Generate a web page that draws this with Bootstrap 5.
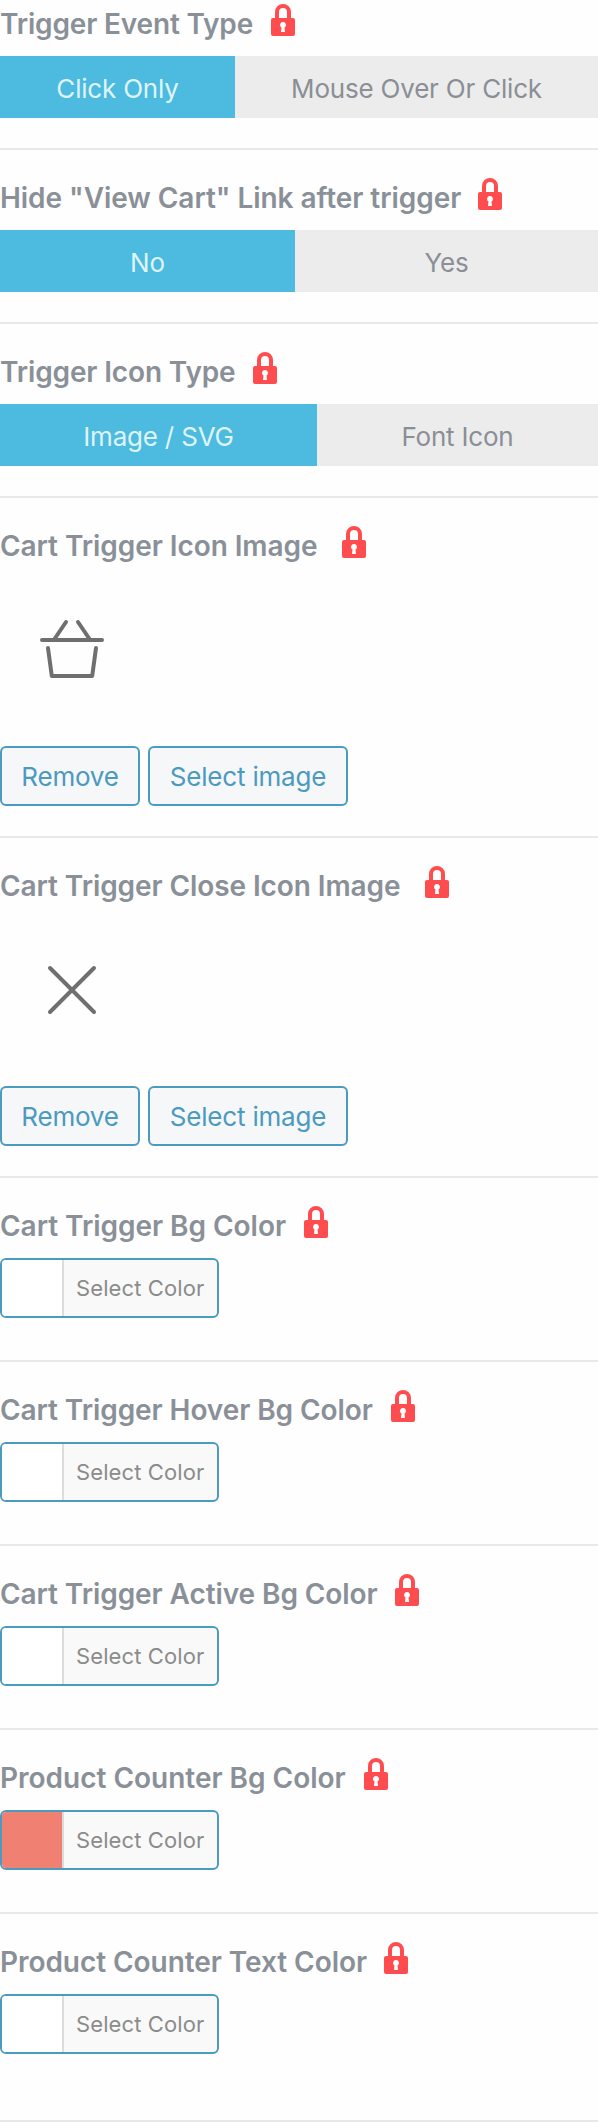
<!DOCTYPE html>
<html lang="en">
<head>
<meta charset="utf-8">
<meta name="viewport" content="width=device-width, initial-scale=1">
<title>Cart trigger settings</title>
<link href="https://cdn.jsdelivr.net/npm/bootstrap@5.3.0/dist/css/bootstrap.min.css" rel="stylesheet">
<style>
  body { font-family: Inter, "Liberation Sans", sans-serif; background: #fefefe; color: #8a8f96; overflow-x: hidden; }
  .field { padding: 28px 0 30px; border-bottom: 2px solid #e8e8e8; }
  .field:first-child { padding-top: 4px; }
  .field-color { padding-bottom: 42px; }
  .field-color:last-child { padding-bottom: 66px; }
  .field-head { height: 52px; }
  .field-title { width: var(--title-w); letter-spacing: var(--track, 0); font-size: 28px; font-weight: 600; line-height: 40px; white-space: nowrap; margin: 0; color: #8a9098; }
  .lock { width: 24px; height: 32px; flex: none; display: block; }

  /* title column width and tracking for each setting */
  .f-event   { --title-w: 271px; --track: -.17px; }
  .f-hide    { --title-w: 478px; --track: -.05px; }
  .f-type    { --title-w: 253px; --track: -.14px; }
  .f-image   { --title-w: 342px; --track: -.07px; }
  .f-close   { --title-w: 425px; --track: -.09px; }
  .f-bg      { --title-w: 304px; --track: -.04px; }
  .f-hover   { --title-w: 391px; --track: -.08px; }
  .f-active  { --title-w: 395px; --track: -.08px; }
  .f-counter { --title-w: 364px; --track: -.01px; }
  .f-text    { --title-w: 384px; --track: -.06px; }

  .switch .btn { height: 62px; padding: 3px 0 0; border: 0; border-radius: 0; background: #ececec; color: #8a8f96; font-size: 26px; line-height: 59px; letter-spacing: -.2px; flex: 1 1 0; }
  .switch .btn.active { background: #4dbbdf; color: #dff4fa; flex: none; }
  .f-event .btn.active { width: 235px; }
  .f-hide .btn.active { width: 295px; }
  .f-type .btn.active { width: 317px; }

  .preview { height: 168px; padding: 36px 0 0 36px; }
  .preview svg { width: 72px; height: 72px; display: block; }
  .btn-pick { height: 60px; padding: 1px 0 0; border: 2px solid #4b9abf; border-radius: 6px; background: #f6f7f9; color: #4b9abf; font-size: 26px; line-height: 55px; letter-spacing: -.2px; }
  .btn-remove { width: 140px; }
  .btn-select { width: 200px; }

  .picker { width: 219px; height: 60px; padding: 0; border: 2px solid #4b9abf; border-radius: 6px; background: #f9f9f9; overflow: hidden; }
  .swatch { width: 60px; background: #fff; }
  .swatch-coral { background: #f08072; }
  .picker-label { border-left: 2px solid #dcdcdc; padding-left: 12px; font-size: 22px; line-height: 56px; letter-spacing: .1px; color: #8b8b8b; white-space: nowrap; text-align: left; }
</style>
</head>
<body>
<svg class="d-none" aria-hidden="true">
  <symbol id="lock" viewBox="0 0 24 32">
    <path d="M6 15V8a6 6 0 0 1 12 0v7" fill="none" stroke="#ff4d4f" stroke-width="4"/>
    <rect y="14" width="24" height="18" rx="2" fill="#ff4d4f"/>
    <path d="M12 18a3 3 0 0 1 1.500 5.600L14 28h-4l.500-4.400A3 3 0 0 1 12 18z" fill="#fff"/>
  </symbol>
</svg>
<main>
  <section class="field f-event">
    <div class="field-head d-flex align-items-start"><h2 class="field-title">Trigger Event Type</h2><svg class="lock"><use href="#lock"/></svg></div>
    <div class="switch d-flex"><button class="btn active">Click Only</button><button class="btn">Mouse Over Or Click</button></div>
  </section>
  <section class="field f-hide">
    <div class="field-head d-flex align-items-start"><h2 class="field-title">Hide "View Cart" Link after trigger</h2><svg class="lock"><use href="#lock"/></svg></div>
    <div class="switch d-flex"><button class="btn active">No</button><button class="btn">Yes</button></div>
  </section>
  <section class="field f-type">
    <div class="field-head d-flex align-items-start"><h2 class="field-title">Trigger Icon Type</h2><svg class="lock"><use href="#lock"/></svg></div>
    <div class="switch d-flex"><button class="btn active">Image / SVG</button><button class="btn">Font Icon</button></div>
  </section>
  <section class="field f-image">
    <div class="field-head d-flex align-items-start"><h2 class="field-title">Cart Trigger Icon Image</h2><svg class="lock"><use href="#lock"/></svg></div>
    <div class="preview">
      <svg viewBox="0 0 72 72" fill="none" stroke="#6f6f6f" stroke-width="4" stroke-linecap="round" stroke-linejoin="round"><path d="M6 26H66M30 8L18.500 25M42 8L53.500 25M12 34L15.800 62H56.200L60 34"/></svg>
    </div>
    <div class="d-flex gap-2"><button class="btn btn-pick btn-remove">Remove</button><button class="btn btn-pick btn-select">Select image</button></div>
  </section>
  <section class="field f-close">
    <div class="field-head d-flex align-items-start"><h2 class="field-title">Cart Trigger Close Icon Image</h2><svg class="lock"><use href="#lock"/></svg></div>
    <div class="preview">
      <svg viewBox="0 0 72 72" fill="none" stroke="#6f6f6f" stroke-width="4" stroke-linecap="round"><path d="M14 14l44 44M58 14L14 58"/></svg>
    </div>
    <div class="d-flex gap-2"><button class="btn btn-pick btn-remove">Remove</button><button class="btn btn-pick btn-select">Select image</button></div>
  </section>
  <section class="field field-color f-bg">
    <div class="field-head d-flex align-items-start"><h2 class="field-title">Cart Trigger Bg Color</h2><svg class="lock"><use href="#lock"/></svg></div>
    <button class="btn picker d-flex align-items-stretch"><span class="swatch"></span><span class="picker-label flex-fill">Select Color</span></button>
  </section>
  <section class="field field-color f-hover">
    <div class="field-head d-flex align-items-start"><h2 class="field-title">Cart Trigger Hover Bg Color</h2><svg class="lock"><use href="#lock"/></svg></div>
    <button class="btn picker d-flex align-items-stretch"><span class="swatch"></span><span class="picker-label flex-fill">Select Color</span></button>
  </section>
  <section class="field field-color f-active">
    <div class="field-head d-flex align-items-start"><h2 class="field-title">Cart Trigger Active Bg Color</h2><svg class="lock"><use href="#lock"/></svg></div>
    <button class="btn picker d-flex align-items-stretch"><span class="swatch"></span><span class="picker-label flex-fill">Select Color</span></button>
  </section>
  <section class="field field-color f-counter">
    <div class="field-head d-flex align-items-start"><h2 class="field-title">Product Counter Bg Color</h2><svg class="lock"><use href="#lock"/></svg></div>
    <button class="btn picker d-flex align-items-stretch"><span class="swatch swatch-coral"></span><span class="picker-label flex-fill">Select Color</span></button>
  </section>
  <section class="field field-color f-text">
    <div class="field-head d-flex align-items-start"><h2 class="field-title">Product Counter Text Color</h2><svg class="lock"><use href="#lock"/></svg></div>
    <button class="btn picker d-flex align-items-stretch"><span class="swatch"></span><span class="picker-label flex-fill">Select Color</span></button>
  </section>
</main>
<script src="https://cdn.jsdelivr.net/npm/bootstrap@5.3.0/dist/js/bootstrap.bundle.min.js"></script>
</body>
</html>
